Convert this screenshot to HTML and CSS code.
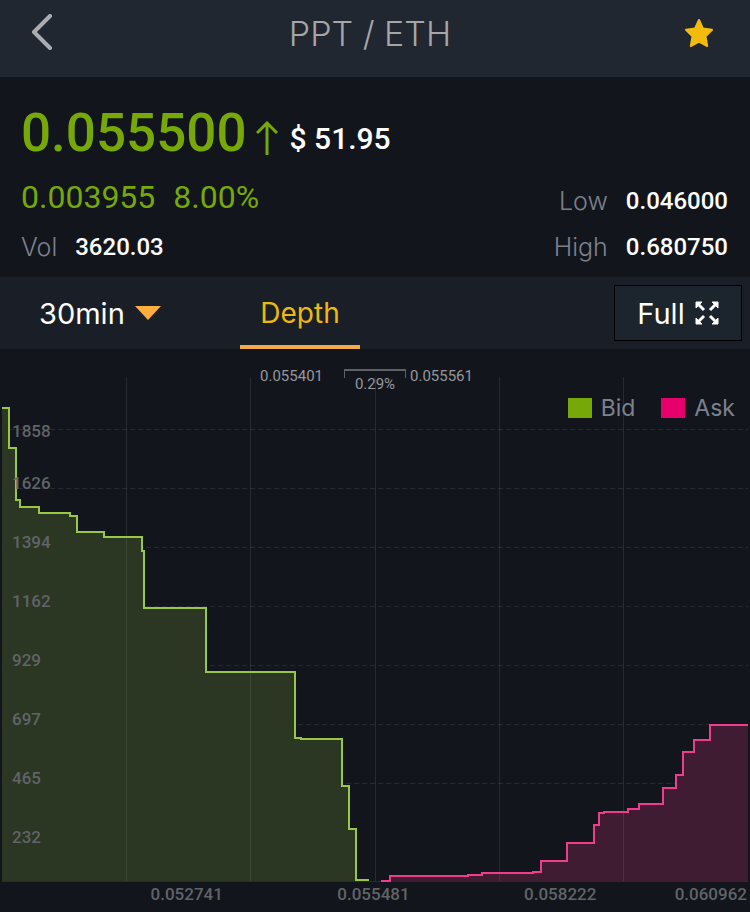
FILE: index.html
```html
<!DOCTYPE html>
<html lang="en">
<head>
<meta charset="utf-8">
<meta name="viewport" content="width=device-width, initial-scale=1">
<title>PPT / ETH</title>
<link rel="stylesheet" href="styles.css">
</head>
<body>
<header class="topbar">
  <button class="icon-button" type="button" aria-label="Back">
    <svg width="22" height="38" viewBox="0 0 22 38" fill="none" stroke="#acacb0" stroke-width="4" stroke-linecap="round" stroke-linejoin="round"><path d="M19 2 3 18 19 34"/></svg>
  </button>
  <h1 class="title">PPT / ETH</h1>
  <button class="icon-button" type="button" aria-label="Favourite">
    <svg width="30" height="30" viewBox="0 0 30 30" fill="#f3bb0d" stroke="#f3bb0d" stroke-width="2" stroke-linejoin="round"><path d="M15 2 19 10.600 28 11.800 21.500 18.300 23.200 28 15 23.600 6.800 28 8.500 18.300 2 11.800 11 10.600Z"/></svg>
  </button>
</header>

<main>
  <section class="summary">
    <div class="quote">
      <div class="price-row">
        <span class="price">0.055500</span>
        <svg class="arrow" width="22" height="34" viewBox="0 0 22 34" fill="none" stroke="#76a808" stroke-width="3"><path d="M11 34V2M1 12 11 2 21 12"/></svg>
        <span class="fiat">$ 51.95</span>
      </div>
      <div class="change-row"><span>0.003955</span><span>8.00%</span></div>
      <dl class="stat"><dt>Vol</dt><dd>3620.03</dd></dl>
    </div>
    <div class="range">
      <dl class="stat"><dt>Low</dt><dd>0.046000</dd></dl>
      <dl class="stat"><dt>High</dt><dd>0.680750</dd></dl>
    </div>
  </section>

  <nav class="tabs">
    <button class="tab interval" type="button">30min
      <svg width="26" height="14" viewBox="0 0 26 14" fill="#fdae3c"><path d="M0 0H26L13 14Z"/></svg>
    </button>
    <button class="tab depth" type="button">Depth</button>
    <button class="full" type="button">Full
      <svg width="24" height="24" viewBox="0 0 24 24" fill="#fff" stroke="#fff"><g id="corner"><path stroke-width="1" stroke-linejoin="round" d="M1 1H7L1 7Z"/><path stroke-width="3" d="M3 3 9 9"/></g><use href="#corner" transform="matrix(-1 0 0 1 24 0)"/><use href="#corner" transform="matrix(1 0 0 -1 0 24)"/><use href="#corner" transform="matrix(-1 0 0 -1 24 24)"/></svg>
    </button>
  </nav>

  <section class="chart">
    <div class="plot">
      <svg class="curves" viewBox="0 349 750 533" preserveAspectRatio="none" fill="none" aria-hidden="true">
        <path class="grid-y" d="M2 429.500H748M2 488.500H748M2 547.500H748M2 606.500H748M2 665.500H748M2 724.500H748M2 783.500H748"/>
        <path fill="#2d3824" fill-opacity="0.950" d="M2 408H9V448H16V500H20V507H39V513H70V516H77V532H104V537H142V551H144V608H206V672H295V738H301V739H342V786H349V829H356V880H369V881H2Z"/>
        <path fill="#431c35" fill-opacity="0.950" d="M381 881H390V876H468V875H482V873H533V872H541V861H567V843H594V825H599V813H604V812H628V809H639V804H663V788H676V775H683V752H694V740H710V725H748V881Z"/>
        <path class="grid-x" d="M126.500 377V881M250.500 377V881M375.500 377V881M499.500 377V881M623.500 377V881M2 881.500H748"/>
        <path class="line bid" d="M2 408H9V448H16V500H20V507H39V513H70V516H77V532H104V537H142V551H144V608H206V672H295V738H301V739H342V786H349V829H356V880H369"/>
        <path class="line ask" d="M381 881H390V876H468V875H482V873H533V872H541V861H567V843H594V825H599V813H604V812H628V809H639V804H663V788H676V775H683V752H694V740H710V725H748"/>
      </svg>
      <div class="spread">
        <span>0.055401</span>
        <span class="bracket">0.29%</span>
        <span>0.055561</span>
      </div>
      <ul class="legend">
        <li><i class="swatch bid-swatch"></i>Bid</li>
        <li><i class="swatch ask-swatch"></i>Ask</li>
      </ul>
      <ol class="axis-y">
        <li>1858</li><li>1626</li><li>1394</li><li>1162</li><li>929</li><li>697</li><li>465</li><li>232</li>
      </ol>
    </div>
    <div class="axis-x">
      <span></span><span>0.052741</span><span>0.055481</span><span>0.058222</span><span class="last">0.060962</span>
    </div>
  </section>
</main>
</body>
</html>
```
FILE: styles.css
```css
* {
  box-sizing: border-box;
}

body {
  margin: 0;
  background: #12151c;
  color: #fff;
  font-family: Inter, "Liberation Sans", sans-serif;
}

button {
  margin: 0;
  padding: 0;
  border: 0;
  background: none;
  color: inherit;
  font: inherit;
}

svg {
  display: block;
}

dl, dd, ol, ul, h1 {
  margin: 0;
  padding: 0;
  list-style: none;
}

.topbar {
  display: flex;
  align-items: flex-start;
  justify-content: space-between;
  height: 77px;
  padding: 10px 36px 0 31px;
  background: #202731;
}

.icon-button {
  display: flex;
  align-items: center;
  width: 30px;
  height: 46px;
}

.title {
  padding-right: 5px;
  color: #a6a6a8;
  font-size: 34px;
  font-weight: 300;
  line-height: 48px;
}

.summary {
  display: flex;
  justify-content: space-between;
  align-items: flex-end;
  padding: 24px 22px 10px 21px;
}

.price-row {
  display: flex;
  align-items: center;
  height: 64px;
  font-family: Roboto, sans-serif;
  font-weight: 500;
}

.price {
  color: #76a808;
  font-size: 53px;
}

.arrow {
  margin: 10px 12px 0 9px;
}

.fiat {
  padding-top: 10px;
  font-size: 30px;
}

.change-row {
  display: flex;
  gap: 18px;
  margin: 8px 0 6px;
  color: #76a808;
  font-family: Roboto, sans-serif;
  font-size: 32px;
  line-height: 48px;
}

.stat {
  display: flex;
  justify-content: flex-end;
  gap: 18px;
  line-height: 40px;
}

.quote .stat {
  justify-content: flex-start;
}

.range .stat + .stat {
  margin-top: 6px;
}

.stat dt {
  color: #7d818c;
  font-size: 25px;
  font-weight: 300;
}

.stat dd {
  font-family: Roboto, sans-serif;
  font-size: 24px;
  font-weight: 500;
}

.tabs {
  display: flex;
  align-items: center;
  height: 72px;
  padding-right: 8px;
  background: #1a1f27;
  font-size: 29px;
}

.tab {
  display: flex;
  align-items: center;
  height: 72px;
}

.interval {
  gap: 10px;
  width: 240px;
  padding-left: 39px;
}

.depth {
  justify-content: center;
  width: 120px;
  border-top: 4px solid transparent;
  border-bottom: 4px solid #f2ab48;
  color: #edb90f;
  font-size: 28px;
}

.full {
  display: flex;
  align-items: center;
  justify-content: center;
  gap: 10px;
  width: 128px;
  height: 56px;
  margin-left: auto;
  border: 1px solid #000;
  background: #1c242e;
}

.plot {
  position: relative;
  height: 533px;
}

.curves {
  width: 100%;
  height: 100%;
}

.grid-x,
.grid-y {
  stroke: #fff;
  stroke-opacity: 0.09;
}

.grid-y {
  stroke-dasharray: 5 3;
}

.line {
  stroke-width: 2;
}

.bid {
  stroke: #98c645;
}

.ask {
  stroke: #f03c8c;
}

.spread {
  position: absolute;
  top: 17px;
  left: 0;
  right: 0;
  display: grid;
  grid-template-columns: 1fr 62px 1fr;
  color: #96989c;
  font-family: Roboto, sans-serif;
  font-size: 15px;
  line-height: 20px;
}

.spread span:first-child {
  padding-right: 21px;
  text-align: right;
}

.spread span:last-child {
  padding-left: 4px;
}

.bracket {
  position: relative;
  padding-top: 8px;
  text-align: center;
}

.bracket::before {
  content: "";
  position: absolute;
  top: 3px;
  left: 0;
  right: 0;
  height: 7px;
  border: solid #5d6065;
  border-width: 2px 1px 0;
}

.legend {
  position: absolute;
  top: 44px;
  right: 15px;
  display: flex;
  gap: 26px;
  color: #7d818c;
  font-size: 23px;
  line-height: 30px;
}

.legend li {
  display: flex;
  align-items: center;
  gap: 9px;
}

.swatch {
  width: 24px;
  height: 20px;
}

.bid-swatch {
  background: #76a808;
}

.ask-swatch {
  background: #e6006e;
}

.axis-y {
  position: absolute;
  top: 60px;
  left: 12px;
  color: #606468;
  font-family: Roboto, sans-serif;
  font-size: 17px;
  font-weight: 500;
  line-height: 44px;
}

.axis-y li {
  height: 59px;
}

.axis-y li:first-child {
  height: 52px;
}

.axis-x {
  display: grid;
  grid-template-columns: 1fr 2fr 2fr 2fr 1fr;
  padding-right: 3px;
  color: #606468;
  font-family: Roboto, sans-serif;
  font-size: 17px;
  font-weight: 500;
  line-height: 24px;
  text-align: center;
}

.axis-x span {
  min-width: 0;
}

.axis-x .last {
  text-align: right;
}
```
